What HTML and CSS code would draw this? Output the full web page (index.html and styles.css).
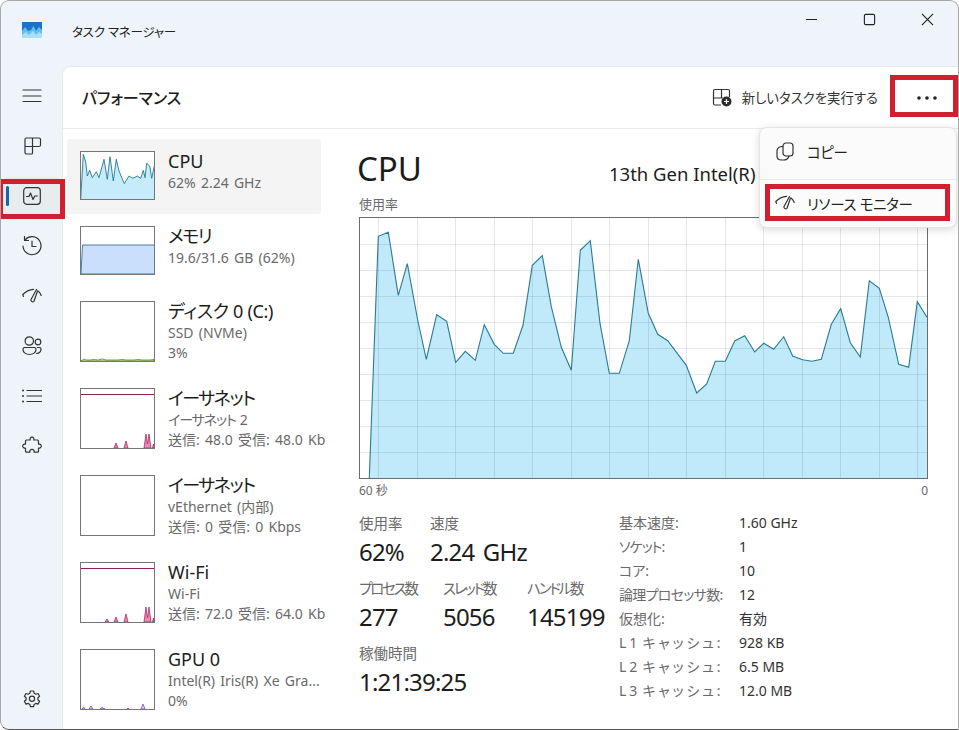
FILE: index.html
```html
<!DOCTYPE html>
<html lang="ja">
<head>
<meta charset="utf-8">
<title>タスク マネージャー</title>
<link rel="stylesheet" href="styles.css">
</head>
<body>
<div class="window">
  <header class="titlebar">
    <svg class="logo" viewBox="0 0 20 16"><rect width="20" height="16" fill="#1b74c9"/><path d="M0 9 L3 5 L6 9 L9 8 L11.5 4 L14 9 L17 5 L20 8 V16 H0Z" fill="#63c0ee"/><path d="M0 13 L4 10 L7 13 L11 9 L14 13 L17 10 L20 12 V16 H0Z" fill="#a8e0f6"/></svg>
    <span class="app-title">タスク マネージャー</span>
    <div class="controls">
      <button class="ctl"><svg viewBox="0 0 14 14"><path d="M1 7H13"/></svg></button>
      <button class="ctl"><svg viewBox="0 0 14 14"><rect x="1.5" y="1.5" width="11" height="11" rx="1.5"/></svg></button>
      <button class="ctl"><svg viewBox="0 0 14 14"><path d="M1 1L13 13M13 1L1 13"/></svg></button>
    </div>
  </header>
  <div class="body">
    <nav class="rail">
      <div class="rail-item"><svg class="ico" viewBox="0 0 20 20"><path d="M1 4H19M1 10H19M1 15.5H19"/></svg></div>
      <div class="rail-item"><svg class="ico" viewBox="0 0 20 20"><path d="M3 3.5a1.5 1.5 0 0 1 1.5-1.5H17a1.5 1.5 0 0 1 1.5 1.5V9a1.5 1.5 0 0 1-1.5 1.5H3M3 3.5V16.5A1.5 1.5 0 0 0 4.5 18H9.500a1 1 0 0 0 1-1V2"/></svg></div>
      <div class="rail-item active"><svg class="ico" viewBox="0 0 20 20"><rect x="1.700" y="1.700" width="16.600" height="16.600" rx="3"/><path d="M4.500 10.500H7L8.500 7L11 13.500L12.800 10H15.500"/></svg></div>
      <div class="rail-item"><svg class="ico" viewBox="0 0 20 20"><path d="M3.200 3.800A9 9 0 1 1 1 10M2.500 0.500V4.500H6.500M10 5V10.500H14"/></svg></div>
      <div class="rail-item"><svg class="ico" viewBox="0 0 20 20"><path d="M1.500 10.500L0.800 8.500C3.500 5.500 7 3.500 11.500 3.300M14.500 3.500L9 13.500a1.800 1.800 0 0 0 3 1.800L15.500 5M16 5C17.500 6 18.500 7.500 19.200 9.500"/></svg></div>
      <div class="rail-item"><svg class="ico" viewBox="0 0 20 20"><circle cx="7.300" cy="5" r="4.200"/><circle cx="16" cy="6" r="2.800"/><path d="M2.500 11.500H12.500A1.800 1.800 0 0 1 14 13.500C14 16.500 11 18.500 7.500 18.500S1 16.500 1 13.500A1.800 1.800 0 0 1 2.500 11.500ZM15.500 11.500H17.500A1.500 1.500 0 0 1 19 13C19 15.500 17 17.300 14.500 17.500"/></svg></div>
      <div class="rail-item"><svg class="ico" viewBox="0 0 20 20"><path d="M5 4.500H20M5 10H20M5 15.500H20"/><circle class="dot" cx="1" cy="4.500" r="1"/><circle class="dot" cx="1" cy="10" r="1"/><circle class="dot" cx="1" cy="15.500" r="1"/></svg></div>
      <div class="rail-item"><svg class="ico" viewBox="0 0 20 20"><path d="M8.200 4c-.5-1.500.4-2.800 1.800-2.800s2.300 1.300 1.800 2.800h3.700a1 1 0 0 1 1 1v3.200c1.500-.5 2.800.4 2.800 1.900s-1.300 2.400-2.800 1.900v3.200a1 1 0 0 1-1 1h-3.400c.5-1.600-.6-2.800-2.100-2.800s-2.600 1.200-2.100 2.800h-3.400a1 1 0 0 1-1-1v-3.200c-1.500.5-2.800-.4-2.800-1.900s1.300-2.400 2.800-1.900V5a1 1 0 0 1 1-1z"/></svg></div>
      <div class="rail-item settings"><svg class="ico" viewBox="0 0 20 20"><path d="M8.400 2h3.200l.5 2.200 1.700 1 2.200-.7 1.600 2.800-1.700 1.500v2l1.700 1.500-1.600 2.800-2.200-.7-1.700 1-.5 2.200H8.400l-.5-2.200-1.700-1-2.200.7-1.600-2.800 1.700-1.500v-2L2.400 7.300 4 4.500l2.200.7 1.700-1z"/><circle cx="10" cy="9.800" r="2.600"/></svg></div>
    </nav>
    <main class="panel">
      <div class="panel-head">
        <h1 class="panel-title">パフォーマンス</h1>
        <div class="actions">
          <svg class="new-ico" viewBox="0 0 20 20"><path d="M1.500 3a1.500 1.500 0 0 1 1.500-1.500H16a1.500 1.500 0 0 1 1.500 1.500V9M1.500 3V15.500A1.500 1.500 0 0 0 3 17H9M9.500 1.500V10H1.500M9.500 10H11"/><circle cx="14.500" cy="13.500" r="5" class="plus-bg"/><path class="plus" d="M14.500 11V16M12 13.500H17"/></svg>
          <span class="new-task">新しいタスクを実行する</span>
          <button class="more"><svg viewBox="0 0 20 4"><circle cx="2" cy="2" r="1.800"/><circle cx="10" cy="2" r="1.800"/><circle cx="18" cy="2" r="1.800"/></svg></button>
        </div>
      </div>
      <div class="panel-main">
        <div class="list">
          <div class="item selected">
            <div class="thumb short"><svg viewBox="1 1 73 47"><path class="cpu-f" d="M0.700 48L3.300 3.300 5.700 10.700 7.300 25 9.700 19.300 12.300 26.700 16.300 20.700 19 26.700 24 8.300 27.300 28.300 30 5.700 33.300 30 36.300 8.300 39 20 44.300 32.700 49 25 53 27.300 57.300 25 60.700 27.300 63.300 19.300 65 26.700 66.700 12.300 69.700 15 71.700 27.300 74.300 15V48Z"/><path class="cpu-l" d="M0.700 48L3.300 3.300 5.700 10.700 7.300 25 9.700 19.300 12.300 26.700 16.300 20.700 19 26.700 24 8.300 27.300 28.300 30 5.700 33.300 30 36.300 8.300 39 20 44.300 32.700 49 25 53 27.300 57.300 25 60.700 27.300 63.300 19.300 65 26.700 66.700 12.300 69.700 15 71.700 27.300 74.300 15"/></svg></div>
            <div class="info"><div class="name">CPU</div><div class="sub">62% 2.24 GHz</div></div>
          </div>
          <div class="item">
            <div class="thumb short"><svg viewBox="1 1 73 47"><path class="mem-f" d="M1 48L2.500 19H75V48Z"/></svg></div>
            <div class="info"><div class="name kana">メモリ</div><div class="sub">19.6/31.6 GB (62%)</div></div>
          </div>
          <div class="item tall">
            <div class="thumb long"><svg viewBox="1 1 73 59"><path class="disk-f" d="M1 60L4 58 6 59 10 59 14 58.500 18 59 22 58 26 59 30 59 34 59 38 59 42 58.500 46 59 50 59 54 59 58 58.500 62 59 66 59 70 59 74 58.500V60Z"/></svg></div>
            <div class="info"><div class="name slight">ディスク 0 (C:)</div><div class="sub">SSD (NVMe)</div><div class="sub">3%</div></div>
          </div>
          <div class="item tall">
            <div class="thumb long"><svg viewBox="1 1 73 59"><path class="limit" d="M1 6.500H74"/><path class="net-f" d="M34 60L36 55 38 60ZM44 60L46 53 48 60ZM64 60L66 46 67.500 56 69 46 71 60ZM72.500 60L73.500 56 74 60Z"/></svg></div>
            <div class="info"><div class="name kana">イーサネット</div><div class="sub kana">イーサネット 2</div><div class="sub">送信: 48.0 受信: 48.0 Kb</div></div>
          </div>
          <div class="item tall">
            <div class="thumb long"></div>
            <div class="info"><div class="name kana">イーサネット</div><div class="sub">vEthernet (内部)</div><div class="sub">送信: 0 受信: 0 Kbps</div></div>
          </div>
          <div class="item tall">
            <div class="thumb long"><svg viewBox="1 1 73 59"><path class="limit" d="M1 6.500H74"/><path class="net-f" d="M25 60L27 57 29 60ZM34 60L36 55 38 60ZM44 60L46 52 48 60ZM64 60L66 45 67.500 56 69 45 71 60ZM72.500 60L73.500 56 74 60Z"/></svg></div>
            <div class="info"><div class="name">Wi-Fi</div><div class="sub">Wi-Fi</div><div class="sub">送信: 72.0 受信: 64.0 Kb</div></div>
          </div>
          <div class="item tall">
            <div class="thumb long"><svg viewBox="1 1 73 59"><path class="gpu-f" d="M2 60L3.500 58 5 60ZM9 60L11 57 13 60ZM20 60L22 58.500 25 60ZM47 60L48 59 49 60ZM61 60L63 55 65 60Z"/></svg></div>
            <div class="info"><div class="name">GPU 0</div><div class="sub">Intel(R) Iris(R) Xe Gra...</div><div class="sub">0%</div></div>
          </div>
        </div>
        <section class="detail">
          <div class="detail-head"><div class="big">CPU</div><div class="model">13th Gen Intel(R)</div></div>
          <div class="chart-label">使用率</div>
          <svg class="chart" viewBox="359 217 569 262">
            <path class="area" d="M369.300 478L378.300 236.300 388.300 232.300 398.300 295.300 407.300 263.700 417.700 320 426.300 359.300 436.700 314.700 446.700 321.300 455.700 362.300 465.300 351.300 475.300 360.300 484.300 324.700 494.300 344.300 503.300 353.300 513.300 353.300 523 325.300 532.300 265.300 542.300 255.700 551.300 306.700 561.300 347.300 571.300 370.300 580.300 250.300 590.300 240.700 600 323.300 609.300 373.300 619.300 373.300 629.300 340.700 638.300 259.300 648.300 313.300 657.700 334.300 667.700 340.700 677.300 353.300 686.300 365.300 696.700 393 706.700 384 715.300 361.300 725.300 361.300 734.700 341 744.700 335.700 754.700 352 763.700 343.300 773.700 349.300 783.700 336.700 792.700 356 802.700 359.700 812 361.300 821.300 359.300 831.300 324.300 840.700 308.700 850.300 342.700 860.300 357 869.300 280.700 879.300 288.300 888.300 317.300 898.700 364.300 908.700 367.300 917.300 301.700 927 317.300V478Z"/>
            <path class="grid" d="M378.500 218V478M417.500 218V478M455.500 218V478M494.500 218V478M532.500 218V478M571.500 218V478M609.500 218V478M648.500 218V478M686.500 218V478M725.500 218V478M763.500 218V478M802.500 218V478M840.500 218V478M879.500 218V478M917.500 218V478M360 244.500H927M360 270.500H927M360 296.500H927M360 322.500H927M360 348.500H927M360 374.500H927M360 400.500H927M360 426.500H927M360 452.500H927"/>
            <path class="line" d="M369.300 478L378.300 236.300 388.300 232.300 398.300 295.300 407.300 263.700 417.700 320 426.300 359.300 436.700 314.700 446.700 321.300 455.700 362.300 465.300 351.300 475.300 360.300 484.300 324.700 494.300 344.300 503.300 353.300 513.300 353.300 523 325.300 532.300 265.300 542.300 255.700 551.300 306.700 561.300 347.300 571.300 370.300 580.300 250.300 590.300 240.700 600 323.300 609.300 373.300 619.300 373.300 629.300 340.700 638.300 259.300 648.300 313.300 657.700 334.300 667.700 340.700 677.300 353.300 686.300 365.300 696.700 393 706.700 384 715.300 361.300 725.300 361.300 734.700 341 744.700 335.700 754.700 352 763.700 343.300 773.700 349.300 783.700 336.700 792.700 356 802.700 359.700 812 361.300 821.300 359.300 831.300 324.300 840.700 308.700 850.300 342.700 860.300 357 869.300 280.700 879.300 288.300 888.300 317.300 898.700 364.300 908.700 367.300 917.300 301.700 927 317.300"/>
            <rect class="frame" x="359.500" y="217.500" width="568" height="261"/>
          </svg>
          <div class="axis"><span>60 秒</span><span>0</span></div>
          <div class="stats">
            <div class="stats-left">
              <div class="stat-row">
                <div class="stat w71"><div class="lab">使用率</div><div class="val">62%</div></div>
                <div class="stat"><div class="lab">速度</div><div class="val">2.24 GHz</div></div>
              </div>
              <div class="stat-row">
                <div class="stat w84"><div class="lab tight">プロセス数</div><div class="val">277</div></div>
                <div class="stat w84"><div class="lab tight">スレッド数</div><div class="val">5056</div></div>
                <div class="stat"><div class="lab tight">ハンドル数</div><div class="val">145199</div></div>
              </div>
              <div class="stat-row">
                <div class="stat"><div class="lab">稼働時間</div><div class="val">1:21:39:25</div></div>
              </div>
            </div>
            <dl class="specs">
              <dt>基本速度:</dt><dd>1.60 GHz</dd>
              <dt class="narrow">ソケット:</dt><dd>1</dd>
              <dt>コア:</dt><dd>10</dd>
              <dt class="narrower">論理プロセッサ数:</dt><dd>12</dd>
              <dt>仮想化:</dt><dd>有効</dd>
              <dt class="wide">L1 キャッシュ:</dt><dd>928 KB</dd>
              <dt class="wide">L2 キャッシュ:</dt><dd>6.5 MB</dd>
              <dt class="wide">L3 キャッシュ:</dt><dd>12.0 MB</dd>
            </dl>
          </div>
        </section>
      </div>
    </main>
  </div>
  <div class="menu">
    <div class="menu-row first"><svg class="ico" viewBox="0 0 20 20"><rect x="8" y="1" width="10" height="13" rx="3"/><path d="M8 4.500C4 4.500 2 6 2 9V14C2 16.500 4 18 6.500 18H9C11.500 18 13 17 14 14"/></svg><span>コピー</span></div>
    <div class="menu-row"><svg class="ico" viewBox="0 0 20 20"><path d="M1.500 10.500L0.800 8.500C3.500 5.500 7 3.500 11.500 3.300M14.500 3.500L9 13.500a1.800 1.800 0 0 0 3 1.800L15.500 5M16 5C17.500 6 18.500 7.500 19.200 9.500"/></svg><span>リソース モニター</span></div>
  </div>
  <div class="mark mark-rail"></div>
  <div class="mark mark-more"></div>
  <div class="mark mark-menu"></div>
</div>
</body>
</html>
```

FILE: styles.css
```css
* { box-sizing: border-box; }
html, body { margin: 0; padding: 0; background: #fff; }
body {
  font-family: "Noto Sans", "Noto Sans CJK JP", sans-serif;
  font-feature-settings: "palt";
  color: #1c1c1c;
  overflow: hidden;
}
.window {
  position: relative;
  width: 959px;
  height: 730px;
  background: #eef4f9;
  border: 1px solid #a8a8a8;
  border-bottom-color: #555;
  border-radius: 9px 9px 0 9px;
  overflow: hidden;
  display: flex;
  flex-direction: column;
}
.titlebar { height: 65px; display: flex; align-items: flex-start; flex: none; }
.logo { width: 20px; height: 16px; margin: 21px 0 0 21px; }
.app-title { margin: 21px 0 0 30px; font-size: 12.500px; line-height: 22px; letter-spacing: -0.200px; color: #222; }
.controls { margin-left: auto; margin-right: 2px; display: flex; }
.ctl { width: 58px; height: 36px; border: 0; background: none; padding: 0; display: flex; align-items: center; justify-content: center; }
.ctl svg { width: 13px; height: 13px; fill: none; stroke: #222; stroke-width: 1.200; }
.body { flex: 1; display: flex; min-height: 0; }
.rail { width: 61px; flex: none; padding: 5px 0; display: flex; flex-direction: column; }
.rail-item { height: 50px; flex: none; display: flex; align-items: center; justify-content: center; position: relative; }
.rail-item.settings { margin-top: auto; height: 50px; }
.rail-item.active::before { content: ""; position: absolute; left: 2px; right: 1px; top: 6px; bottom: 4px; background: #e7ecef; border-radius: 5px; }
.rail-item.active::after { content: ""; position: absolute; left: 5px; top: 15px; width: 3px; height: 20px; border-radius: 2px; background: #1265ae; }
.ico { position: relative; width: 20px; height: 20px; fill: none; stroke: #333; stroke-width: 1.200; stroke-linejoin: round; stroke-linecap: round; flex: none; }
.ico .dot { fill: #333; stroke: none; }
.panel { flex: 1; min-width: 0; background: #fff; border-left: 1px solid #e6e9ec; border-top: 1px solid #e6e9ec; border-top-left-radius: 9px; display: flex; flex-direction: column; }
.panel-head { height: 62px; flex: none; border-bottom: 1px solid #ebebeb; display: flex; align-items: center; padding: 0 4px 0 19px; }
.panel-title { margin: 0; font-size: 16px; font-weight: 500; line-height: 22px; color: #1c1c1c; }
.actions { margin-left: auto; display: flex; align-items: center; }
.new-ico { width: 20px; height: 20px; fill: none; stroke: #333; stroke-width: 1.200; margin-right: 10px; }
.new-ico .plus-bg { fill: #2b2b2b; stroke: none; }
.new-ico .plus { stroke: #fff; }
.new-task { font-size: 13.400px; line-height: 20px; color: #333; }
.more { width: 58px; height: 32px; margin-left: 18px; border: 0; background: none; padding: 0 0 0 3px; display: flex; align-items: center; justify-content: center; }
.more svg { width: 20px; height: 4px; fill: #222; }
.panel-main { flex: 1; display: flex; min-height: 0; }
.list { width: 259px; margin: 10px 0 0 4px; flex: none; overflow: hidden; }
.item { width: 254px; height: 75px; padding: 12px 13px 0; display: flex; gap: 13px; border-radius: 3px; white-space: nowrap; }
.item.tall { height: 87px; }
.item.selected { background: #f4f4f4; }
.thumb { width: 75px; flex: none; border: 1px solid #767676; background: #fff; }
.thumb.short { height: 49px; }
.thumb.long { height: 61px; }
.thumb svg { display: block; width: 100%; height: 100%; }
.cpu-f { fill: #c6ebfa; }
.cpu-l { fill: none; stroke: #24798f; stroke-width: 0.900; }
.mem-f { fill: #c9dffb; stroke: #27608f; stroke-width: 0.800; }
.disk-f { fill: #dfeec6; stroke: #55871b; stroke-width: 0.800; }
.limit { fill: none; stroke: #8a1f5c; stroke-width: 1; }
.net-f { fill: #e58fb4; stroke: #a52a6c; stroke-width: 0.800; }
.gpu-f { fill: #e7d3f3; stroke: #8a45b5; stroke-width: 0.800; }
.info { padding-top: 0; margin-top: -2px; min-width: 0; }
.name { font-size: 18px; line-height: 24px; color: #1c1c1c; }
.name.kana { letter-spacing: -1.500px; }
.name.slight { letter-spacing: -0.300px; }
.sub { font-size: 14px; line-height: 20px; color: #6a6a6a; word-spacing: 1.600px; }
.sub.kana { letter-spacing: -1.100px; }
.detail { flex: 1; min-width: 0; margin-left: 33px; padding-right: 30px; }
.detail-head { display: grid; grid-template-columns: 250px 1fr; align-items: end; padding-top: 15px; height: 62px; }
.big { font-size: 33px; line-height: 44px; margin-left: -2px; color: #1c1c1c; }
.model { font-size: 18.500px; line-height: 26px; padding-bottom: 4px; color: #1c1c1c; }
.chart-label { font-size: 13px; line-height: 16px; margin-top: 5px; color: #6a6a6a; height: 21px; }
.chart { display: block; width: 569px; height: 262px; }
.area { fill: #c0e9f9; }
.line { fill: none; stroke: #2a7a94; stroke-width: 1.100; }
.grid { fill: none; stroke: rgba(80, 100, 110, 0.150); stroke-width: 1; }
.frame { fill: none; stroke: #6c6c6c; stroke-width: 1; }
.axis { display: flex; justify-content: space-between; font-size: 12px; line-height: 16px; color: #6a6a6a; margin-top: 4px; }
.stats { display: flex; margin-top: 14px; }
.stats-left { width: 260px; flex: none; display: flex; flex-direction: column; gap: 9px; }
.stat-row { display: flex; }
.w71 { width: 71px; }
.w84 { width: 84px; }
.lab { font-size: 14.500px; line-height: 20px; color: #6a6a6a; }
.lab.tight { letter-spacing: -2.200px; }
.val { font-size: 24px; line-height: 34px; margin-top: 2px; letter-spacing: -0.800px; word-spacing: 3px; color: #1c1c1c; }
.specs { margin: -2px 0 0; display: grid; grid-template-columns: 120px auto; grid-auto-rows: 24px; font-size: 14px; line-height: 24px; align-self: flex-start; }
.specs dt { color: #6a6a6a; }
.specs dt.narrow { letter-spacing: -1px; }
.specs dt.narrower { letter-spacing: -0.700px; }
.specs dt.wide { letter-spacing: 2.800px; word-spacing: -4px; }
.specs dd { margin: 0; color: #333; }
.menu { position: absolute; left: 758px; top: 126px; width: 198px; height: 101px; background: #fbfbfb; border: 1px solid #e4e4e4; border-radius: 8px; box-shadow: 0 2px 8px rgba(0, 0, 0, 0.14); display: flex; flex-direction: column; }
.menu-row { flex: 1; display: flex; align-items: center; gap: 12px; padding-left: 15px; font-size: 14.500px; letter-spacing: -0.300px; color: #222; }
.menu-row.first { border-bottom: 1px solid #e8e8e8; padding-bottom: 3px; }
.mark { position: absolute; border: 5px solid #d0202f; }
.mark-rail { left: -3px; top: 178px; width: 67px; height: 40px; }
.mark-more { left: 889px; top: 74px; width: 68px; height: 42px; }
.mark-menu { left: 764px; top: 183px; width: 185px; height: 37px; }
```
